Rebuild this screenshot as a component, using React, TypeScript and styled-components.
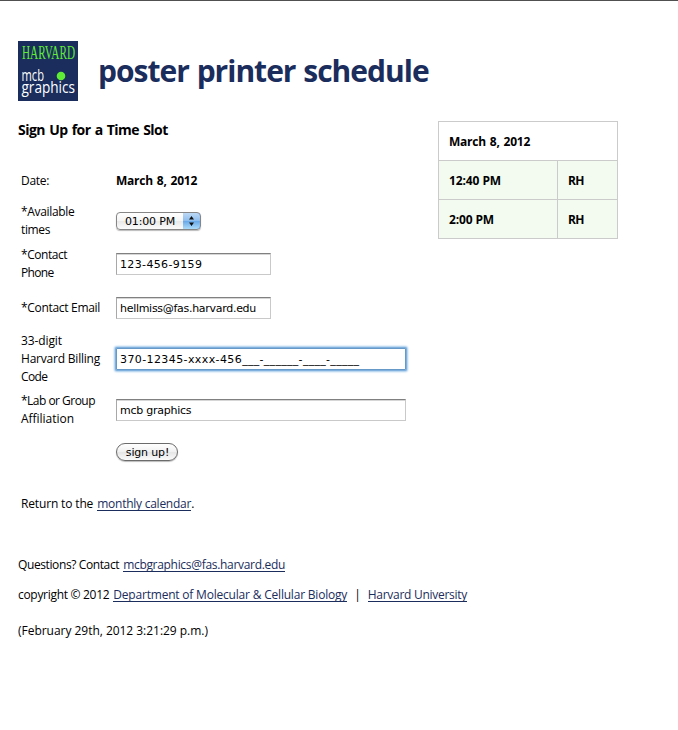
import React from 'react';
import styled, { createGlobalStyle } from 'styled-components';

const NAVY = '#1a2d5c';

const GlobalStyle = createGlobalStyle`
  * { box-sizing: border-box; }
  body {
    margin: 0;
    background: #fff;
    color: #000;
    font: 12px/18px 'Open Sans', 'Trebuchet MS', sans-serif;
    white-space: nowrap;
  }
`;

const Page = styled.div`
  height: 730px;
  overflow: hidden;
  border-top: 1px solid #505050;
  padding: 40px 0 0 18px;
`;

/* Letter-spaced run of text */
const Text = styled.span<{ $track?: number }>`
  letter-spacing: ${(p) => p.$track ?? 0}px;
`;

const Header = styled.header`
  display: flex;
  align-items: center;
  height: 60px;
  gap: 20px;
`;

const Logo = styled.svg`
  display: block;
  width: 60px;
  height: 60px;
`;

const Title = styled.h1`
  margin: 0;
  color: ${NAVY};
  font-size: 30px;
  line-height: 40px;
  font-weight: 700;
  letter-spacing: -1px;
  word-spacing: 1px;
`;

const Columns = styled.main`
  display: flex;
  align-items: flex-start;
  height: 368px;
  padding-top: 20px;
`;

const FormColumn = styled.section`
  width: 420px;
`;

const SectionTitle = styled.h2`
  margin: 0;
  height: 44px;
  font-size: 14px;
  line-height: 18px;
  font-weight: 700;
  letter-spacing: -0.52px;
  word-spacing: 1px;
`;

const Form = styled.form`
  display: grid;
  grid-template-columns: 95px 1fr;
  grid-template-rows: 32px 48px 38px 50px 52px 50px 34px;
  align-items: center;
  padding-left: 3px;
`;

const Label = styled.label`
  display: flex;
  flex-direction: column;
`;

const Value = styled.strong`
  font-weight: 700;
  letter-spacing: -0.23px;
  word-spacing: 1px;
`;

const Field = styled.div<{ $width: number; $focused?: boolean }>`
  width: ${(p) => p.$width}px;
  height: 22px;
  padding: 1px 0 0 3px;
  border: 1px solid #c9c9c9;
  border-top-color: #808080;
  border-left-color: #a8a8a8;
  background: #fff;
  font: 11px/20px 'DejaVu Sans', 'Lucida Grande', sans-serif;
  box-shadow: inset 0 1px 0 #d6d6d6;
  ${(p) =>
    p.$focused &&
    `
    border-color: #6799c8;
    box-shadow: 0 0 0 1px #7fb0de, 0 0 2px 2px #a5caec;
    border-radius: 1px;
  `}
`;

const Picker = styled.div`
  display: flex;
  justify-content: space-between;
  width: 85px;
  height: 18px;
  border: 1px solid #868686;
  border-radius: 4px;
  overflow: hidden;
  padding-left: 8px;
  background: linear-gradient(#fff 0%, #f5f5f5 48%, #e9e9e9 52%, #fbfbfb 100%);
  box-shadow: 0 1px 1px #bbb;
  font: 11px/17px 'DejaVu Sans', 'Lucida Grande', sans-serif;
`;

const PickerArrows = styled.svg`
  width: 18px;
  height: 18px;
  margin: -1px -1px 0 0;
`;

const SubmitButton = styled.button`
  justify-self: start;
  width: 62px;
  height: 18px;
  margin: 0;
  padding: 1px 0 0 1px;
  border: 1px solid #6b6b6b;
  border-radius: 9px;
  background: linear-gradient(#fff 0%, #f1f1f1 48%, #e6e6e6 52%, #fbfbfb 100%);
  box-shadow: 0 1px 1px #bbb;
  color: #000;
  font: 11px/15px 'DejaVu Sans', 'Lucida Grande', sans-serif;
  letter-spacing: -0.15px;
`;

const Schedule = styled.section`
  display: grid;
  grid-template-columns: 118px 59px;
  grid-auto-rows: 38px;
  gap: 1px;
  padding: 1px;
  background: #cbcbcb;
  font-weight: 700;
`;

const ScheduleHead = styled.div`
  grid-column: 1 / -1;
  display: flex;
  align-items: center;
  padding: 2px 0 0 10px;
  background: #fff;
  word-spacing: 1px;
`;

const Slot = styled.div`
  display: flex;
  align-items: center;
  padding: 2px 0 0 10px;
  background: #f3fbf1;
`;

const Return = styled.p`
  margin: 0;
  padding: 26px 0 0 3px;
`;

const Footer = styled.footer`
  display: flex;
  flex-direction: column;
`;

const FooterLine = styled.p<{ $gap: number }>`
  display: flex;
  margin: ${(p) => p.$gap}px 0 0;
  line-height: 18px;
`;

const Link = styled.a<{ $track: number }>`
  display: inline-block;
  height: 16px;
  color: ${NAVY};
  line-height: 18px;
  border-bottom: 1px solid ${NAVY};
  letter-spacing: ${(p) => p.$track}px;
`;

const Gap = styled.span<{ $width: number }>`
  display: inline-block;
  width: ${(p) => p.$width}px;
`;

export default function App() {
  return (
    <>
      <GlobalStyle />
      <Page>
        <Header>
          <Logo viewBox="0 0 60 60">
            <rect width="60" height="60" fill={NAVY} />
            <text x="4" y="17.5" fontFamily="Liberation Serif, serif" fontSize="18" textLength="53" lengthAdjust="spacingAndGlyphs" fill="#5fec35">HARVARD</text>
            <text x="3.5" y="40" fontFamily="Open Sans, sans-serif" fontSize="17" textLength="22.5" lengthAdjust="spacingAndGlyphs" fill="#fff">mcb</text>
            <text x="3.5" y="52" fontFamily="Open Sans, sans-serif" fontSize="17" textLength="53.5" lengthAdjust="spacingAndGlyphs" fill="#fff">graphics</text>
            <circle cx="43" cy="35" r="4.3" fill="#5fec35" />
          </Logo>
          <Title>poster printer schedule</Title>
        </Header>

        <Columns>
          <FormColumn>
            <SectionTitle>Sign Up for a Time Slot</SectionTitle>
            <Form>
              <Label><Text $track={-0.31}>Date:</Text></Label>
              <Value>March 8, 2012</Value>

              <Label>
                <Text $track={-0.33}>*Available</Text>
                <Text $track={-0.37}>times</Text>
              </Label>
              <Picker>
                <Text $track={-0.17}>01:00 PM</Text>
                <PickerArrows viewBox="0 0 18 18">
                  <defs>
                    <linearGradient id="aqua" x2="0" y2="1">
                      <stop offset="0" stopColor="#c3dcf6" />
                      <stop offset="0.48" stopColor="#8fbeee" />
                      <stop offset="0.52" stopColor="#6aa9e8" />
                      <stop offset="1" stopColor="#b5e2fc" />
                    </linearGradient>
                  </defs>
                  <rect width="18" height="18" fill="url(#aqua)" />
                  <path d="M0 .5H14Q17.5 .5 17.5 4V14Q17.5 17.5 14 17.5H0" fill="none" stroke="#3e5ea4" />
                  <path d="M6 7.5L8.5 4L11 7.5ZM6 10.5H11L8.5 14Z" fill="#111" />
                </PickerArrows>
              </Picker>

              <Label>
                <Text $track={-0.46}>*Contact</Text>
                <Text $track={-0.65}>Phone</Text>
              </Label>
              <Field $width={155}><Text $track={0.36}>123-456-9159</Text></Field>

              <Label><Text $track={-0.31}>*Contact Email</Text></Label>
              <Field $width={155}><Text $track={-0.29}>hellmiss@fas.harvard.edu</Text></Field>

              <Label>
                <Text $track={-0.1}>33-digit</Text>
                <Text $track={-0.21}>Harvard Billing</Text>
                <Text $track={-0.6}>Code</Text>
              </Label>
              <Field $width={290} $focused>
                <Text $track={0.4}>370-12345-xxxx-456</Text>
                <Text $track={0.3}>___-______-____-_____</Text>
              </Field>

              <Label>
                <Text $track={-0.52}>*Lab or Group</Text>
                <Text $track={-0.03}>Affiliation</Text>
              </Label>
              <Field $width={290}><Text $track={-0.25}>mcb graphics</Text></Field>

              <span />
              <SubmitButton type="button">sign up!</SubmitButton>
            </Form>
          </FormColumn>

          <Schedule>
            <ScheduleHead><Text $track={-0.23}>March 8, 2012</Text></ScheduleHead>
            <Slot><Text $track={-0.1}>12:40 PM</Text></Slot>
            <Slot><Text $track={-0.7}>RH</Text></Slot>
            <Slot><Text $track={-0.14}>2:00 PM</Text></Slot>
            <Slot><Text $track={-0.7}>RH</Text></Slot>
          </Schedule>
        </Columns>

        <Return>
          <Text $track={-0.15}>Return to the</Text>
          <Gap $width={4} />
          <Link $track={-0.25}>monthly calendar</Link>.
        </Return>

        <Footer>
          <FooterLine $gap={43}>
            <Text $track={-0.39}>Questions? Contact</Text>
            <Gap $width={4} />
            <Link $track={-0.31}>mcbgraphics@fas.harvard.edu</Link>
          </FooterLine>
          <FooterLine $gap={12}>
            <Text $track={-0.3}>copyright © 2012</Text>
            <Gap $width={4} />
            <Link $track={-0.2}>Department of Molecular &amp; Cellular Biology</Link>
            <Gap $width={7} />
            <Text>|</Text>
            <Gap $width={7} />
            <Link $track={-0.28}>Harvard University</Link>
          </FooterLine>
          <FooterLine $gap={18}>
            <Text $track={-0.03}>(February 29th, 2012 3:21:29 p.m.)</Text>
          </FooterLine>
        </Footer>
      </Page>
    </>
  );
}
